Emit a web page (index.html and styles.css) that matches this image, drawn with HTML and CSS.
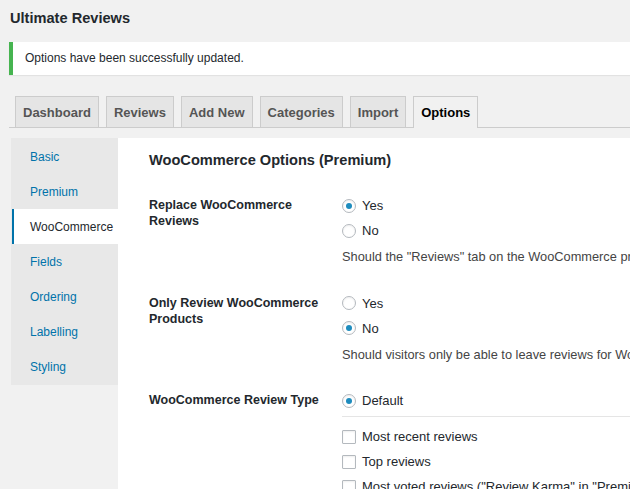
FILE: index.html
```html
<!DOCTYPE html>
<html>
<head>
<meta charset="utf-8">
<link rel="stylesheet" href="styles.css">
</head>
<body>
<div class="wrap">
  <h1 class="title">Ultimate Reviews</h1>
  <div class="notice">Options have been successfully updated.</div>
  <nav class="tabs">
    <a class="tab">Dashboard</a>
    <a class="tab">Reviews</a>
    <a class="tab">Add New</a>
    <a class="tab">Categories</a>
    <a class="tab">Import</a>
    <a class="tab active">Options</a>
  </nav>
  <div class="options">
    <ul class="side">
      <li>Basic</li>
      <li>Premium</li>
      <li class="current">WooCommerce</li>
      <li>Fields</li>
      <li>Ordering</li>
      <li>Labelling</li>
      <li>Styling</li>
    </ul>
    <div class="panel">
      <h2 class="heading">WooCommerce Options (Premium)</h2>
      <div class="row">
        <div class="label">Replace WooCommerce Reviews</div>
        <div class="field">
          <div class="choice"><span class="radio on"></span>Yes</div>
          <div class="choice"><span class="radio"></span>No</div>
          <p class="desc">Should the "Reviews" tab on the WooCommerce product page be replaced with the Ultimate Reviews tab?</p>
        </div>
      </div>
      <div class="row">
        <div class="label">Only Review WooCommerce Products</div>
        <div class="field">
          <div class="choice"><span class="radio"></span>Yes</div>
          <div class="choice"><span class="radio on"></span>No</div>
          <p class="desc">Should visitors only be able to leave reviews for WooCommerce products?</p>
        </div>
      </div>
      <div class="row">
        <div class="label">WooCommerce Review Type</div>
        <div class="field">
          <div class="choice"><span class="radio on"></span>Default</div>
          <hr class="sep">
          <div class="choice"><span class="check"></span>Most recent reviews</div>
          <div class="choice"><span class="check"></span>Top reviews</div>
          <div class="choice"><span class="check"></span>Most voted reviews ("Review Karma" in "Premium" options)</div>
        </div>
      </div>
    </div>
  </div>
</div>
</body>
</html>
```
FILE: styles.css
```css
html, body {
  margin: 0;
  padding: 0;
  background: #f1f1f1;
  overflow: hidden;
  font-family: "Liberation Sans", Arial, sans-serif;
  color: #23282d;
}
.wrap {
  padding: 0 0 0 9px;
  width: 900px;
}
.title {
  margin: 0;
  padding: 9px 0 0 1px;
  height: 42px;
  box-sizing: border-box;
  font-size: 14.6px;
  font-weight: 700;
  line-height: 18px;
  color: #23282d;
}
.notice {
  background: #fff;
  border-left: 4px solid #46b450;
  box-shadow: 0 1px 1px rgba(0,0,0,0.06);
  height: 33px;
  box-sizing: border-box;
  padding: 0 0 0 12px;
  font-size: 12px;
  line-height: 33px;
  color: #23282d;
}
.tabs {
  display: flex;
  gap: 7px;
  margin-top: 21px;
  padding-left: 6px;
  border-bottom: 1px solid #ccc;
  height: 31px;
}
.tab {
  display: block;
  box-sizing: border-box;
  height: 31px;
  padding: 0 7px;
  border: 1px solid #ccc;
  border-bottom: none;
  background: #e5e5e5;
  color: #555;
  font-size: 13px;
  font-weight: 700;
  line-height: 31px;
}
.tab.active {
  background: #f1f1f1;
  color: #000;
  height: 32px;
  margin-bottom: -1px;
}
.options {
  display: flex;
  align-items: flex-start;
  margin-top: 10px;
  margin-left: 2px;
}
.side {
  list-style: none;
  margin: 0;
  padding: 1px 0 0;
  width: 107px;
  height: 247px;
  box-sizing: border-box;
  background: #e8e8e8;
  flex: none;
}
.side li {
  height: 35px;
  line-height: 36px;
  padding-left: 19px;
  font-size: 12px;
  color: #0073aa;
}
.side li.current {
  background: #fff;
  color: #23282d;
  border-left: 2px solid #0073aa;
  margin-left: 1px;
  padding-left: 16px;
}
.panel {
  flex: 1;
  background: #fff;
  min-height: 400px;
  padding: 12px 0 0 31px;
}
.heading {
  margin: 0 0 23px;
  font-size: 14.6px;
  font-weight: 700;
  line-height: 20px;
  color: #23282d;
}
.row {
  display: flex;
  margin-bottom: 25.5px;
}
.label {
  width: 193px;
  flex: none;
  font-size: 12.5px;
  font-weight: 700;
  line-height: 16px;
  padding-top: 4px;
  padding-right: 10px;
  box-sizing: border-box;
}
.field {
  flex: 1;
}
.choice {
  display: flex;
  align-items: center;
  height: 25px;
  font-size: 13px;
  color: #23282d;
  white-space: nowrap;
}
.radio {
  width: 14px;
  height: 14px;
  border: 1px solid #b4b9be;
  border-radius: 50%;
  box-sizing: border-box;
  margin-right: 6px;
  background: #fff;
  box-shadow: inset 0 1px 2px rgba(0,0,0,0.07);
  display: flex;
  align-items: center;
  justify-content: center;
  flex: none;
}
.radio.on::after {
  content: "";
  width: 6px;
  height: 6px;
  border-radius: 50%;
  background: #1e8cbe;
}
.check {
  width: 14px;
  height: 14px;
  border: 1px solid #b4b9be;
  border-radius: 1px;
  box-sizing: border-box;
  margin-right: 6px;
  background: #fff;
  box-shadow: inset 0 1px 2px rgba(0,0,0,0.07);
  flex: none;
}
.desc {
  margin: 6px 0 0;
  font-size: 12.8px;
  line-height: 16px;
  color: #444;
  white-space: nowrap;
}
.sep {
  border: none;
  border-top: 1px solid #e5e5e5;
  margin: 3px 0 7px;
}
```
